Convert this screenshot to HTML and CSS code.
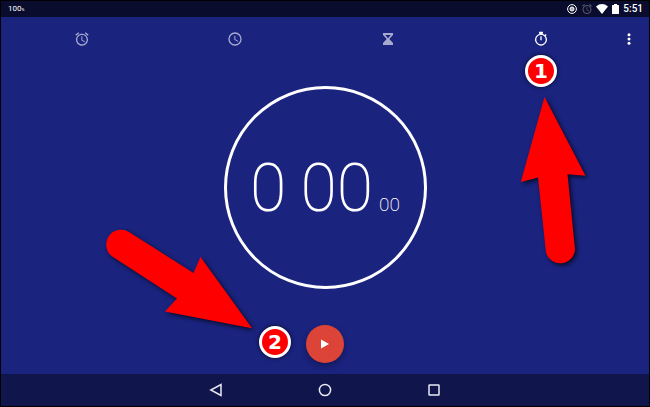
FILE: index.html
```html
<!DOCTYPE html>
<html lang="en">
<head>
<meta charset="utf-8">
<meta name="viewport" content="width=device-width, initial-scale=1">
<title>Stopwatch</title>
<link rel="stylesheet" href="styles.css">
</head>
<body>
<div class="screen">
  <header class="status">
    <span class="battery-level">100<small>%</small></span>
    <div class="status-icons">
      <svg width="10" height="10" viewBox="0 0 10 10"><circle cx="5" cy="5" r="4.400" fill="none" stroke="#fff"/><circle cx="5" cy="5" r="2" fill="#aaa" stroke="#fff"/></svg>
      <svg class="dim" width="12" height="12" viewBox="0 0 24 24"><use href="#alarm"/></svg>
      <svg width="12" height="10" viewBox="0 0 12 10"><path fill="#fff" d="M0 2.400Q6-2.200 12 2.400L6 10Z"/></svg>
      <svg class="battery" width="7" height="10" viewBox="0 0 7 10"><path fill="#fff" d="M2 0h3v1h1.400q.6 0 .6.600v7.800q0 .6-.6.600H.6Q0 10 0 9.400V1.600Q0 1 .6 1H2z"/></svg>
      <time>5:51</time>
    </div>
  </header>
  <nav class="tabs">
    <button class="tab" aria-label="Alarm"><svg width="16" height="16" viewBox="0 0 24 24"><path id="alarm" fill="currentColor" d="M22 5.720l-4.600-3.860-1.290 1.530 4.600 3.860L22 5.720zM7.880 3.390L6.600 1.860 2 5.710l1.290 1.530 4.590-3.850zM12.500 8H11v6l4.750 2.850.75-1.230-4-2.370V8zM12 4c-4.970 0-9 4.030-9 9s4.020 9 9 9a9 9 0 0 0 0-18zm0 16c-3.870 0-7-3.130-7-7s3.130-7 7-7 7 3.130 7 7-3.130 7-7 7z"/></svg></button>
    <button class="tab" aria-label="Clock"><svg width="16" height="16" viewBox="0 0 24 24"><path fill="currentColor" d="M12 2a10 10 0 1 0 0 20 10 10 0 0 0 0-20zm0 18a8 8 0 1 1 0-16 8 8 0 0 1 0 16zM12.500 7H11v6l5.250 3.150.75-1.230-4.500-2.670z"/></svg></button>
    <button class="tab" aria-label="Timer"><svg width="12" height="12" viewBox="0 0 12 12"><path fill="currentColor" fill-rule="evenodd" d="M1 0h10v2L7.300 6 11 10v2H1v-2l3.700-4L1 2zM3.200 2L6 5.200 8.800 2z"/></svg></button>
    <button class="tab active" aria-label="Stopwatch"><svg width="16" height="16" viewBox="0 0 24 24"><path fill="currentColor" d="M15 1H9v3h6V1zm-4 13h2V8h-2v6zm8.030-6.610l1.420-1.420c-.43-.51-.9-.99-1.410-1.410l-1.420 1.420A8.960 8.960 0 0 0 12 4a9 9 0 1 0 7.030 3.390zM12 20c-3.870 0-7-3.130-7-7s3.130-7 7-7 7 3.130 7 7-3.130 7-7 7z"/></svg></button>
    <button class="more" aria-label="More options"><svg width="4" height="12" viewBox="0 0 4 12"><g fill="#fff"><circle cx="2" cy="1.700" r="1.500"/><circle cx="2" cy="6" r="1.500"/><circle cx="2" cy="10.300" r="1.500"/></g></svg></button>
  </nav>
  <main class="stopwatch">
    <div class="dial">
      <span class="digits">0</span><span class="digits">00</span><span class="hundredths">00</span>
    </div>
    <button class="start" aria-label="Start"><svg width="8" height="10" viewBox="0 0 8 10"><path fill="#fff" d="M0 .5v9L8 5z"/></svg></button>
  </main>
  <footer class="system-nav">
    <button aria-label="Back"><svg width="14" height="14" viewBox="0 0 14 14"><path d="M12 1.500v11L1.800 7z"/></svg></button>
    <button aria-label="Home"><svg width="14" height="14" viewBox="0 0 14 14"><circle cx="7" cy="7" r="5.600"/></svg></button>
    <button aria-label="Recent apps"><svg width="14" height="14" viewBox="0 0 14 14"><rect x="2" y="2" width="10" height="10" rx=".5"/></svg></button>
  </footer>
  <svg class="arrow arrow-tab" width="66" height="170" viewBox="520 96 66 170"><path d="M544.500 97L585.500 175.800 567.500 174.300 575 249.500A14.800 14.800 0 0 1 546 252.500L538 177.500 520.800 182Z"/></svg>
  <svg class="arrow arrow-start" width="147" height="100" viewBox="105 229 147 100"><path d="M252 328.300L165 311.500 177 298.500 113 257A14.800 14.800 0 0 1 129 232L193.500 273 200.500 257Z"/></svg>
  <span class="badge badge-tab">1</span>
  <span class="badge badge-start">2</span>
</div>
</body>
</html>
```
FILE: styles.css
```css
* { box-sizing: border-box; }

body {
  margin: 0;
  background: #000;
  color: #fff;
  font-family: Roboto, "Liberation Sans", sans-serif;
}

button {
  padding: 0;
  border: 0;
  background: none;
  color: inherit;
}

svg { display: block; }

.screen {
  position: relative;
  display: flex;
  flex-direction: column;
  min-height: 100vh;
  border: 1px solid #000;
  background: #1a237e;
}

.status {
  display: flex;
  align-items: center;
  justify-content: space-between;
  height: 16px;
  padding: 0 6px 0 7px;
  background: #090c2c;
}

.battery-level {
  font: 8px/16px Roboto, sans-serif;
}

.battery-level small { font-size: 4px; }

.status-icons {
  display: flex;
  align-items: center;
  font-size: 10px;
  font-weight: 500;
  line-height: 16px;
}

.dim { margin: 0 3px 0 4px; opacity: .3; }
.battery { margin: 0 4px; }

.tabs {
  display: flex;
  height: 44px;
  padding-left: 5px;
}

.tab {
  display: grid;
  flex: 1;
  place-items: center;
  color: #a6aad0;
}

.active { color: #fff; }

.more {
  display: grid;
  flex: 0 0 32px;
  place-items: center;
  padding-right: 8px;
}

.stopwatch {
  display: flex;
  flex: 1;
  flex-direction: column;
  align-items: center;
  padding: 25px 0 11px;
}

.dial {
  display: flex;
  align-items: baseline;
  justify-content: center;
  width: 203px;
  height: 203px;
  padding-top: 60px;
  border: 3px solid #fff;
  border-radius: 50%;
  font-weight: 200;
}

.digits {
  margin-right: 14px;
  font-size: 66px;
  line-height: 80px;
}

.digits + .digits { margin-right: 6px; }

.hundredths { font-size: 19px; }

.start {
  display: grid;
  place-items: center;
  width: 38px;
  height: 38px;
  margin-top: 36px;
  border-radius: 50%;
  background: #db4437;
  box-shadow: 0 3px 6px rgba(0, 0, 0, .3);
}

.system-nav {
  display: flex;
  align-items: center;
  justify-content: center;
  gap: 95px;
  height: 32px;
  background: #10154b;
}

.system-nav svg {
  fill: none;
  stroke: #e8e9f2;
  stroke-width: 1.5;
}

.arrow {
  position: absolute;
  overflow: visible;
  fill: #f00;
  filter: drop-shadow(2px 2px 2px rgba(0, 0, 0, .7));
}

.arrow-tab { left: 519px; top: 95px; }
.arrow-start { left: 104px; top: 228px; }

.badge {
  position: absolute;
  width: 32px;
  height: 32px;
  border: 3px solid #fff;
  border-radius: 50%;
  background: #f00;
  box-shadow: 0 0 4px rgba(0, 0, 0, .7);
  font: bold 20px/26px "DejaVu Sans", sans-serif;
  text-align: center;
}

.badge-tab { left: 524px; top: 54px; }
.badge-start { left: 258px; top: 325px; }
```
